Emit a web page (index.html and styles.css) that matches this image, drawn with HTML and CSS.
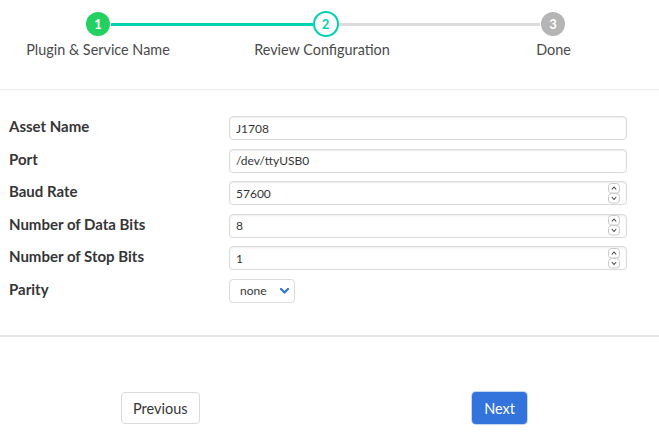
FILE: index.html
```html
<!DOCTYPE html>
<html lang="en">
<head>
<meta charset="utf-8">
<title>Add Service</title>
<link rel="stylesheet" href="styles.css">
</head>
<body>
<div class="steps">
  <div class="track">
    <span class="marker done">1</span>
    <span class="line active"></span>
    <span class="marker current">2</span>
    <span class="line"></span>
    <span class="marker todo">3</span>
  </div>
  <div class="step-labels">
    <span>Plugin &amp; Service Name</span>
    <span>Review Configuration</span>
    <span>Done</span>
  </div>
</div>
<div class="rule-top"></div>
<form class="fields">
  <label class="label">Asset Name</label>
  <input class="input" type="text" value="J1708">
  <label class="label">Port</label>
  <input class="input" type="text" value="/dev/ttyUSB0">
  <label class="label">Baud Rate</label>
  <div class="num">
    <input class="input" type="number" value="57600">
    <svg class="spin" width="13" height="21" viewBox="0 0 13 21"><rect x="0.5" y="0.5" width="11" height="9.5" rx="3" fill="#fff" stroke="#c9c9c9"/><rect x="0.5" y="10.5" width="11" height="9.5" rx="3" fill="#fff" stroke="#c9c9c9"/><polyline points="3.8,6.5 6,4 8.2,6.5" fill="none" stroke="#444" stroke-width="1.1"/><polyline points="3.8,14 6,16.5 8.2,14" fill="none" stroke="#444" stroke-width="1.1"/></svg>
  </div>
  <label class="label">Number of Data Bits</label>
  <div class="num">
    <input class="input" type="number" value="8">
    <svg class="spin" width="13" height="21" viewBox="0 0 13 21"><rect x="0.5" y="0.5" width="11" height="9.5" rx="3" fill="#fff" stroke="#c9c9c9"/><rect x="0.5" y="10.5" width="11" height="9.5" rx="3" fill="#fff" stroke="#c9c9c9"/><polyline points="3.8,6.5 6,4 8.2,6.5" fill="none" stroke="#444" stroke-width="1.1"/><polyline points="3.8,14 6,16.5 8.2,14" fill="none" stroke="#444" stroke-width="1.1"/></svg>
  </div>
  <label class="label">Number of Stop Bits</label>
  <div class="num">
    <input class="input" type="number" value="1">
    <svg class="spin" width="13" height="21" viewBox="0 0 13 21"><rect x="0.5" y="0.5" width="11" height="9.5" rx="3" fill="#fff" stroke="#c9c9c9"/><rect x="0.5" y="10.5" width="11" height="9.5" rx="3" fill="#fff" stroke="#c9c9c9"/><polyline points="3.8,6.5 6,4 8.2,6.5" fill="none" stroke="#444" stroke-width="1.1"/><polyline points="3.8,14 6,16.5 8.2,14" fill="none" stroke="#444" stroke-width="1.1"/></svg>
  </div>
  <label class="label">Parity</label>
  <div class="select">
    <select>
      <option>none</option>
      <option>odd</option>
      <option>even</option>
    </select>
    <svg class="chev" width="9" height="6" viewBox="0 0 9 6"><polyline points="1,1 4.5,4.5 8,1" fill="none" stroke="#3273dc" stroke-width="2.2" stroke-linecap="round" stroke-linejoin="round"/></svg>
  </div>
</form>
<div class="rule-bottom"></div>
<div class="actions">
  <button class="btn" type="button">Previous</button>
  <button class="btn primary" type="button">Next</button>
</div>
</body>
</html>
```
FILE: styles.css
```css
* { box-sizing: border-box; }
html, body { margin: 0; padding: 0; background: #fff; }
body {
  font-family: Lato, "Noto Sans", sans-serif;
  color: #4a4a4a;
  font-size: 14px;
  width: 659px;
  height: 434px;
  overflow: hidden;
}
.steps { padding-top: 12px; }
.track {
  display: flex;
  align-items: center;
  height: 24px;
  padding-left: 86px;
  padding-right: 94px;
}
.marker {
  width: 24px;
  height: 24px;
  border-radius: 50%;
  display: flex;
  align-items: center;
  justify-content: center;
  font-weight: 700;
  font-size: 13px;
  flex: none;
}
.marker.done { background: #23d160; color: #fff; }
.marker.current { width: 26px; height: 26px; margin: 0 -1px; background: #fff; color: #00d1b2; border: 2.5px solid #00d1b2; }
.marker.todo { background: #b5b5b5; color: #fff; }
.line { flex: 1; height: 3px; background: #dbdbdb; margin: 0 1px; }
.line.active { background: #00d1b2; }
.step-labels {
  display: grid;
  grid-template-columns: 196px 252px 211px;
  text-align: center;
  margin-top: 4px;
  line-height: 20px;
  font-size: 14.4px;
  color: #4a4a4a;
}
.rule-top { height: 1px; background: #ededed; margin-top: 29px; }
.fields {
  display: grid;
  grid-template-columns: 220px 398px;
  row-gap: 8.6px;
  padding: 26px 0 0 9px;
  margin: 0;
  align-items: start;
}
.label {
  font-weight: 700;
  color: #363636;
  font-size: 15px;
  line-height: 20px;
}
.input {
  height: 24px;
  width: 100%;
  border: 1px solid #dbdbdb;
  border-radius: 4px;
  box-shadow: inset 0 1px 2px rgba(10, 10, 10, 0.08);
  font-family: inherit;
  font-size: 12px;
  color: #363636;
  padding: 0 6px;
  background: #fff;
  display: block;
}
.input::-webkit-inner-spin-button,
.input::-webkit-outer-spin-button { -webkit-appearance: none; margin: 0; }
.num { position: relative; }
.spin { position: absolute; right: 6px; top: 1.5px; pointer-events: none; }
.select {
  position: relative;
  width: 66px;
  height: 24px;
}
.select select {
  appearance: none;
  -webkit-appearance: none;
  width: 100%;
  height: 100%;
  border: 1px solid #dbdbdb;
  border-radius: 4px;
  background: #fff;
  font-family: inherit;
  font-size: 12px;
  color: #363636;
  padding: 0 0 0 10px;
}
.chev { position: absolute; left: 51px; top: 9px; pointer-events: none; }
.rule-bottom { height: 2.5px; background: #e6e6e6; margin-top: 32px; }
.actions {
  display: flex;
  justify-content: space-between;
  padding: 55px 132px 0 121px;
}
.btn {
  height: 32px;
  padding: 0 11px;
  border: 1px solid #dbdbdb;
  border-radius: 4px;
  background: #fff;
  color: #363636;
  font-family: inherit;
  font-size: 14.5px;
}
.btn.primary {
  background: #3273dc;
  color: #fff;
  border-color: transparent;
  box-shadow: 0 0 0 1px rgba(50, 115, 220, 0.3);
}
```
